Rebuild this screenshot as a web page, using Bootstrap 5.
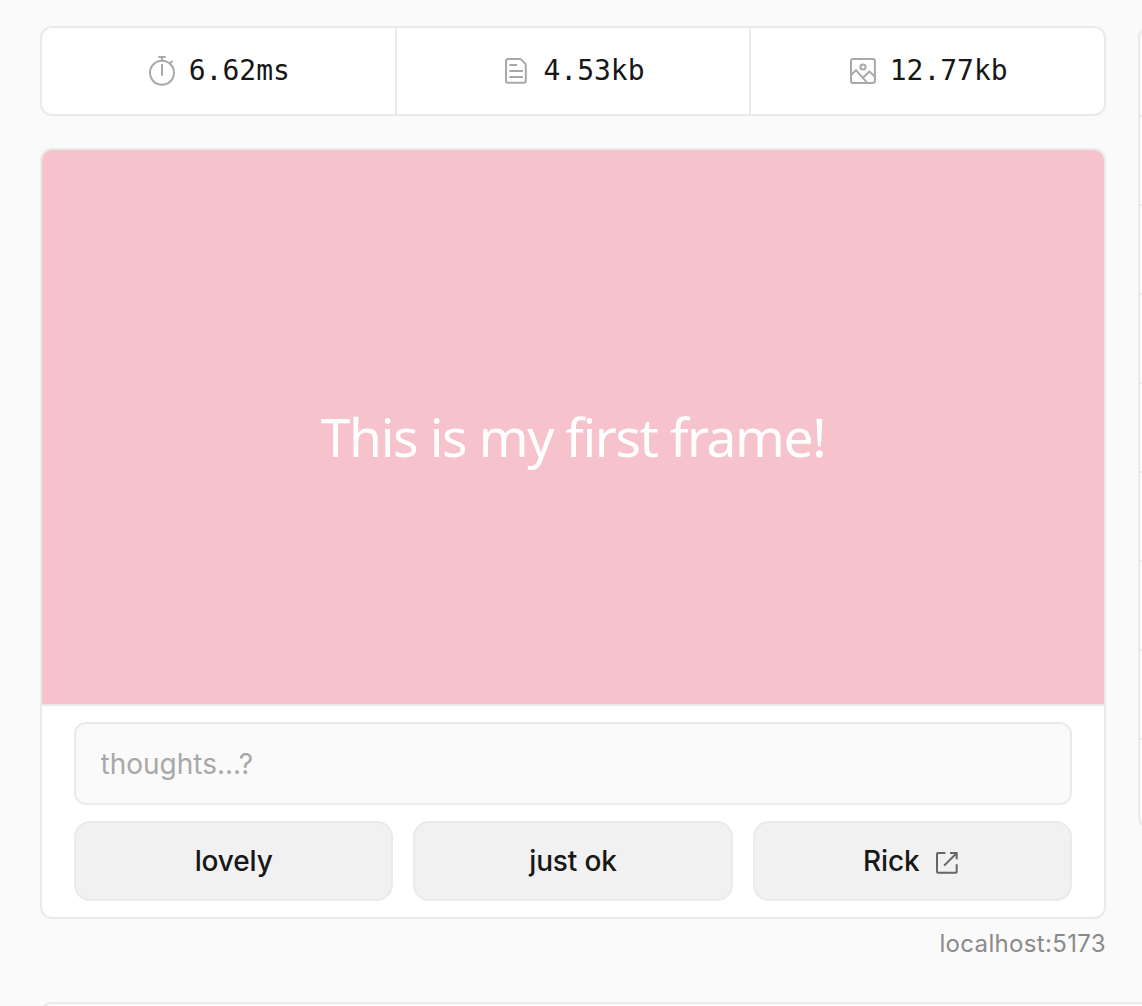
<!DOCTYPE html>
<html lang="en">
<head>
<meta charset="utf-8">
<title>Frame debugger</title>
<link href="https://cdn.jsdelivr.net/npm/bootstrap@5.3.0/dist/css/bootstrap.min.css" rel="stylesheet">
<style>
body{background:#fafafa;color:#171717;font-family:Inter,sans-serif;font-size:28px;line-height:34px;height:1006px;overflow:hidden}
.shell{padding:26px 0 0 40px;height:1006px;overflow:hidden}
.preview-col{width:1066px;flex:none}
.panel{border:2px solid #eaeaea;border-radius:12px;overflow:hidden}
.metrics{height:90px}
.metric{flex:1 1 0;font-family:"DejaVu Sans Mono",monospace;gap:12px;color:#171717}
.metric + .metric{border-left:2px solid #eaeaea}
.metric svg{color:#a8a8a8;flex:none}
.frame-image{height:556px;background:#f6c2cc;color:#fff;border-bottom:2px solid #eaeaea;font-family:"Noto Sans",sans-serif;font-size:53.3px;letter-spacing:-1.37px;padding-top:20px}
.actions{padding:16px 32px;gap:16px;height:211px}
.thoughts{height:83px;border:2px solid #eaeaea;border-radius:12px;background:#fafafa;padding:0 24px 0 24.5px;font-size:28px;color:#171717;box-shadow:none}
.thoughts::placeholder{color:#a8a8a8;opacity:1}
.buttons{gap:20px}
.frame-btn{flex:1 1 0;height:80px;border:2px solid #eaeaea;border-radius:16px;background:#f1f1f1;font-size:28px;font-weight:500;letter-spacing:-.15px;color:#171717;gap:16px;padding:0}
.host{font-size:24px;letter-spacing:.34px;line-height:30px;color:#8a8a8a;margin-top:10px}
.side{flex:none;width:362px;align-self:flex-start}
.side-row{height:89px}
.side-row + .side-row{border-top:2px solid #eaeaea}
.side-row:first-child{height:87px}
.log{height:34px;margin-top:43px;border-right:0;border-radius:12px 0 0 0}
</style>
</head>
<body>
<div class="shell">
  <div class="d-flex" style="gap:32px">
    <main class="preview-col d-flex flex-column">
      <section class="panel metrics bg-white d-flex">
        <div class="metric d-flex align-items-center justify-content-center">
          <svg width="30" height="32" viewBox="0 0 30 32" fill="none" stroke="currentColor" stroke-width="2"><circle cx="15" cy="17.8" r="12"/><path d="M11.3 2h7.4M15 2v4M15 9v11.7M22.2 8.8l3.4-2.9"/></svg>
          <span>6.62ms</span>
        </div>
        <div class="metric d-flex align-items-center justify-content-center">
          <svg width="30" height="32" viewBox="-1 0 30 32" fill="none" stroke="currentColor" stroke-width="2"><path d="M6 4h11.8q.8 0 1.4.6l4 4q.6.6.6 1.4V25.8a2 2 0 0 1-2 2H6a2 2 0 0 1-2-2V6a2 2 0 0 1 2-2zM7.3 10H15M7.3 16H21M7.3 22H21"/></svg>
          <span>4.53kb</span>
        </div>
        <div class="metric d-flex align-items-center justify-content-center">
          <svg width="30" height="32" viewBox="0 0 30 32" fill="none" stroke="currentColor" stroke-width="2"><rect x="3" y="4" width="23.9" height="23.9" rx="2"/><circle cx="15" cy="12" r="2.6"/><path d="M3 20l5-4.8L19 27.6M15.3 22.2l6.2-5.6 5.3 4.8"/></svg>
          <span>12.77kb</span>
        </div>
      </section>
      <section class="panel bg-white" style="margin-top:32px">
        <div class="frame-image d-flex align-items-center justify-content-center"><span>This is my first frame!</span></div>
        <div class="actions d-flex flex-column">
          <input class="thoughts form-control" type="text" placeholder="thoughts...?">
          <div class="buttons d-flex">
            <button class="frame-btn btn">lovely</button>
            <button class="frame-btn btn">just ok</button>
            <button class="frame-btn btn d-flex align-items-center justify-content-center">Rick
              <svg width="26" height="26" viewBox=".7 0 26 26" fill="none" stroke="#666" stroke-width="2"><path d="M10.1 5H2.7a1 1 0 0 0-1 1v17.7a1 1 0 0 0 1 1h17.7a1 1 0 0 0 1-1v-7.4M14.7 5h6.7v6.2M21.2 5.2L8.8 17.6"/></svg>
            </button>
          </div>
        </div>
      </section>
      <div class="host text-end">localhost:5173</div>
    </main>
    <aside class="panel side">
      <div class="side-row"></div><div class="side-row"></div><div class="side-row"></div>
      <div class="side-row"></div><div class="side-row"></div><div class="side-row"></div>
      <div class="side-row"></div><div class="side-row"></div><div class="side-row"></div>
    </aside>
  </div>
  <section class="panel log"></section>
</div>
<script src="https://cdn.jsdelivr.net/npm/bootstrap@5.3.0/dist/js/bootstrap.bundle.min.js"></script>
</body>
</html>
